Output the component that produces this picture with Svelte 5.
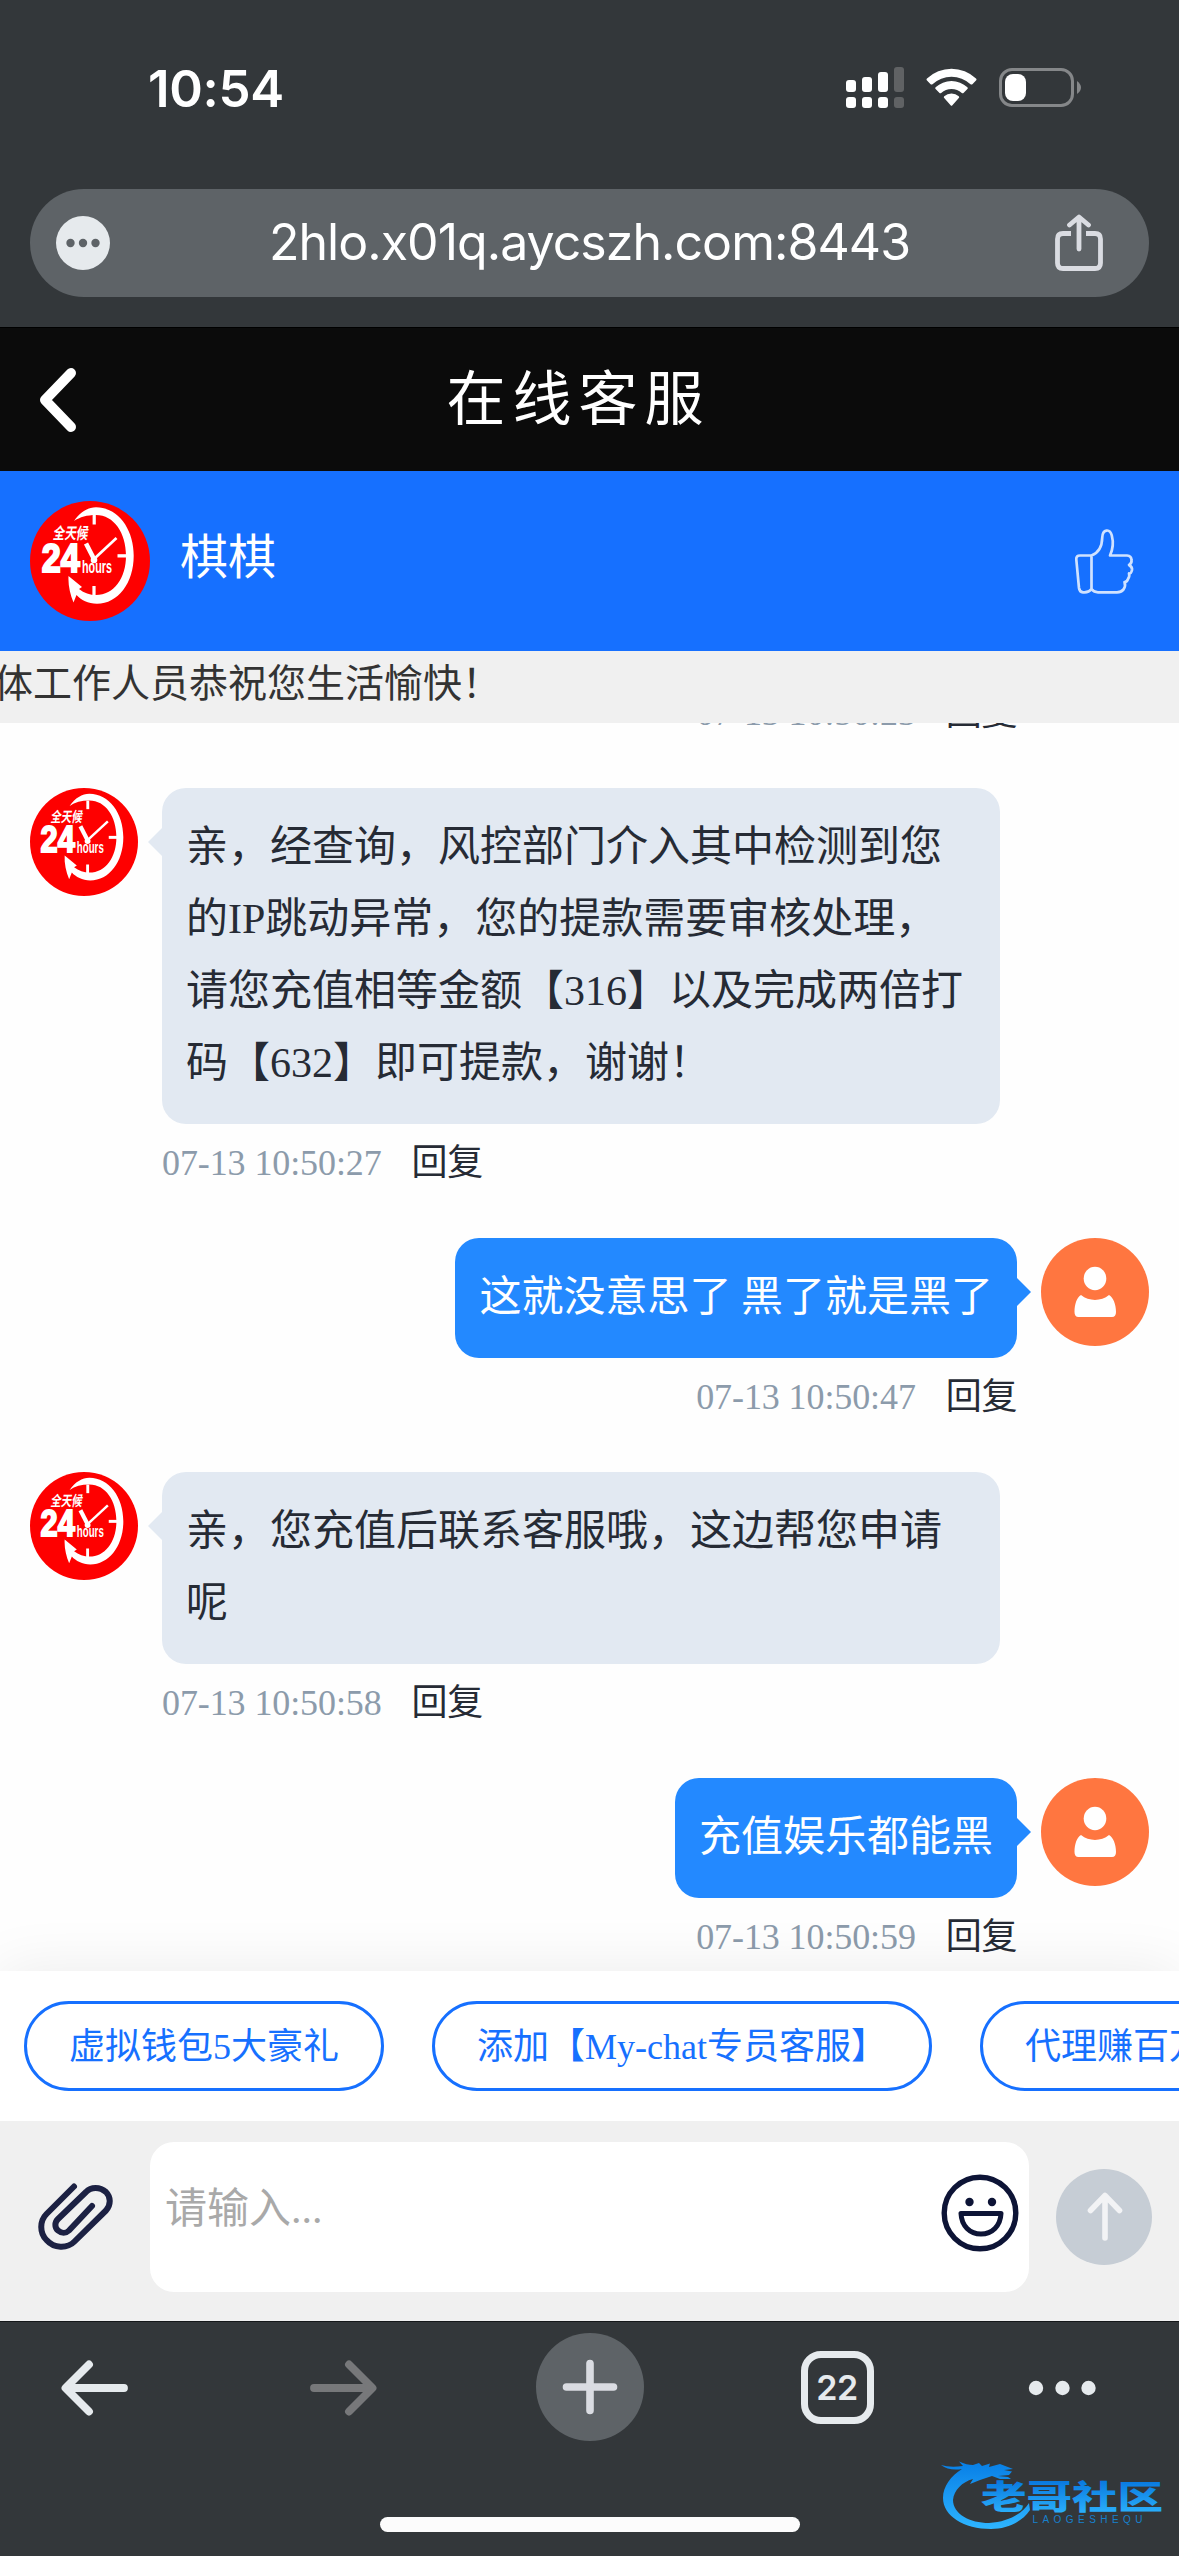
<script>
  const messages = [
    {
      side: 'left',
      lines: [
        '亲，经查询，风控部门介入其中检测到您',
        '的IP跳动异常，您的提款需要审核处理，',
        '请您充值相等金额【316】以及完成两倍打',
        '码【632】即可提款，谢谢！'
      ],
      time: '07-13 10:50:27'
    },
    { side: 'right', lines: ['这就没意思了 黑了就是黑了'], time: '07-13 10:50:47' },
    { side: 'left', lines: ['亲，您充值后联系客服哦，这边帮您申请', '呢'], time: '07-13 10:50:58' },
    { side: 'right', lines: ['充值娱乐都能黑'], time: '07-13 10:50:59' }
  ];
  const chips = ['虚拟钱包5大豪礼', '添加【My-chat专员客服】', '代理赚百万'];
</script>

{#snippet agentAvatar()}
  <svg class="avatar" viewBox="0 0 120 120">
    <circle cx="60" cy="60" r="60" fill="#fe0000" />
    <g fill="#fff">
      <path d="M44 20C50 11 58 6.3 66 6.3C88 6.3 103.7 28 103.7 54.7C103.7 82 88 102.7 67 102.7C58 102.7 51 99 46.5 94L43.5 101.5C40 93 38 84 38.5 75L52 86L49 88C54 92 60 94 66 94C84 94 96 77 96 54.7C96 32 84 14 66 14C57 14 50 16 44 20Z" />
      <rect x="62.6" y="14" width="3.2" height="9.5" />
      <rect x="87.5" y="53.2" width="9.5" height="3.3" />
      <rect x="62.4" y="85" width="3.2" height="10" />
      <circle cx="64" cy="59" r="3.3" />
      <path d="M56 42.5L64 58" stroke="#fff" stroke-width="4.6" />
      <path d="M64 58L86.5 37" stroke="#fff" stroke-width="2.7" />
      <text class="logo-cn" x="0" y="0" transform="translate(22.5 37.5) skewX(-10)" textLength="35" lengthAdjust="spacingAndGlyphs">全天候</text>
      <text class="logo-24" x="11.8" y="71.3" textLength="38" lengthAdjust="spacingAndGlyphs">24</text>
      <text class="logo-hours" x="52" y="72.3" textLength="30" lengthAdjust="spacingAndGlyphs">hours</text>
    </g>
  </svg>
{/snippet}

{#snippet userAvatar()}
  <svg class="avatar" viewBox="0 0 108 108">
    <circle cx="54" cy="54" r="54" fill="#ff7640" />
    <ellipse cx="54" cy="40.5" rx="11.3" ry="11.8" fill="#fff" />
    <path d="M33.5 74C33.5 66 36 59 40 57C48 63.5 60 63.5 68 57C72 59 75 66 75 74Q75 79 71 79H37.500Q33.500 79 33.500 74Z" fill="#fff" />
  </svg>
{/snippet}

<div class="screen">
  <header class="status">
    <span class="clock">10:54</span>
    <svg class="indicators" width="240" height="50" viewBox="843 63 240 50">
      <g fill="#fff">
        <rect x="846" y="80" width="10" height="12" rx="3" />
        <rect x="862" y="77" width="10" height="15" rx="3" />
        <rect x="878" y="72" width="10" height="20" rx="3" />
        <rect x="846" y="97" width="10" height="11" rx="3" />
        <rect x="862" y="97" width="10" height="11" rx="3" />
        <rect x="878" y="97" width="10" height="11" rx="3" />
      </g>
      <rect x="894" y="67" width="10" height="25" rx="3" fill="#606264" />
      <rect x="894" y="97" width="10" height="11" rx="3" fill="#606264" />
      <g fill="#fff">
        <path d="M927 78.500Q926 79.500 927 80.500L930.600 84.200Q931.500 85 932.500 84.200A28 28 0 0 1 970.500 84.200Q971.500 85 972.400 84.200L976 80.500Q977 79.500 976 78.500A35.500 35.500 0 0 0 927 78.500Z" />
        <path d="M935.600 87.300Q934.700 88.200 935.600 89.100L939.500 93Q940.300 93.700 941.200 93A15.500 15.500 0 0 1 961.800 93Q962.700 93.700 963.500 93L967.400 89.100Q968.300 88.200 967.400 87.300A23.500 23.500 0 0 0 935.600 87.300Z" />
        <path d="M944.200 96.200Q943.300 97.100 944.200 98L950.600 105.200Q951.500 106.200 952.400 105.200L958.800 98Q959.700 97.100 958.800 96.200A11 11 0 0 0 944.200 96.200Z" />
      </g>
      <rect x="1000.500" y="69.500" width="72" height="36" rx="11.500" fill="none" stroke="#858789" stroke-width="3" />
      <rect x="1005" y="74" width="21" height="27" rx="8" fill="#fff" />
      <path d="M1077 81Q1081 84 1081 87.500T1077 94Z" fill="#858789" />
    </svg>
  </header>

  <div class="address">
    <svg width="54" height="54" viewBox="0 0 54 54">
      <circle cx="27" cy="27" r="27" fill="#e6eaed" />
      <g fill="#5e6367"><circle cx="14.500" cy="27" r="4.200" /><circle cx="27" cy="27" r="4.200" /><circle cx="39.500" cy="27" r="4.200" /></g>
    </svg>
    <span class="url">2hlo.x01q.aycszh.com:8443</span>
    <svg width="50" height="58" viewBox="1054 215 50 58" fill="none" stroke="#dadce2" stroke-width="4.800">
      <path d="M1071 234.500H1063Q1057.500 234.500 1057.500 240V264Q1057.500 269.500 1063 269.500H1095Q1100.500 269.500 1100.500 264V240Q1100.500 234.500 1095 234.500H1086" />
      <path d="M1079 219V250M1069.500 226L1079 218L1088.500 226" stroke-linecap="round" stroke-linejoin="round" />
    </svg>
  </div>

  <div class="titlebar">
    <svg width="40" height="66" viewBox="0 0 40 66"><path d="M33 6L7 33L33 60" fill="none" stroke="#fff" stroke-width="10" stroke-linecap="round" stroke-linejoin="round" /></svg>
    <h1>在线客服</h1>
  </div>

  <div class="agent">
    {@render agentAvatar()}
    <span class="name">棋棋</span>
    <svg class="thumb" width="90" height="90" viewBox="0 0 90 90" fill="none" stroke="#d0e2ff" stroke-width="2.700" stroke-linejoin="round">
      <path d="M31.500 39.500H20Q16 39.500 16.300 43.500L19 72Q19.500 76 23 76.300Q28.500 77 31.500 73V39.500C38 37 42 32 42.200 22C42.500 12.500 50 12.500 51.800 19.500C53.800 27 53 33 50 39.500H67Q71.500 40 71.500 44Q72 47.500 69 49Q72.500 51 72 54Q71 58 69 57.500Q70 60 68 63Q67 66 64.500 66Q66 70 63.500 73.500Q61 76.300 57 76.300H38Q34 76.300 31.500 73" />
    </svg>
  </div>

  <div class="notice"><span>体工作人员恭祝您生活愉快！</span></div>

  <main class="chat">
    <div class="message right">
      <div class="column">
        <div class="meta"><time>07-13 10:50:23</time><span>回复</span></div>
      </div>
      <div class="spacer"></div>
    </div>
    {#each messages as m}
      <div class="message {m.side}">
        {#if m.side === 'left'}{@render agentAvatar()}{/if}
        <div class="column">
          <div class="bubble">
            {#each m.lines as line}<p>{line}</p>{/each}
          </div>
          <div class="meta"><time>{m.time}</time><span>回复</span></div>
        </div>
        {#if m.side === 'right'}{@render userAvatar()}{/if}
      </div>
    {/each}
  </main>

  <div class="chips">
    {#each chips as chip}<span class="chip">{chip}</span>{/each}
  </div>

  <div class="composer">
    <svg class="clip" width="80" height="74" viewBox="0 0 80 74" fill="none" stroke="#1c2143" stroke-width="6" stroke-linecap="round" stroke-linejoin="round">
      <path d="M38 6.500L10.500 34C3.500 41 3.500 53 10.500 60C18 68.500 31 69 38.500 61.500L70 30.500C75 25 75 17 70 12C64 6.500 55 6.500 50 12L22 39C18.500 42.500 18.500 47.500 22 50.500C25.500 53.500 30 53.500 33 50.500L56 26" />
    </svg>
    <div class="input">
      <span>请输入...</span>
      <svg width="78" height="78" viewBox="0 0 78 78" fill="none" stroke="#0d1436" stroke-width="5.400">
        <circle cx="39" cy="39" r="35.800" />
        <path d="M20 39.500H60C59.500 52 51 60 40 60S20.500 52 20 39.500Z" stroke-width="5" stroke-linejoin="round" />
        <g fill="#0d1436" stroke="none"><circle cx="28.500" cy="28" r="4.200" /><circle cx="51" cy="28" r="4.200" /></g>
      </svg>
    </div>
    <svg class="send" width="96" height="96" viewBox="0 0 96 96">
      <circle cx="48" cy="48" r="48" fill="#c6cdd5" />
      <path d="M49 69V27M34.500 41.500L49 26.500L63.500 41.500" fill="none" stroke="#f2f3f5" stroke-width="5.600" stroke-linecap="round" stroke-linejoin="round" />
    </svg>
  </div>

  <nav class="toolbar">
    <svg width="108" height="108" viewBox="0 0 108 108" fill="none" stroke="#e6eaed" stroke-width="7.800" stroke-linecap="round" stroke-linejoin="round"><path d="M25 55H83M48 31.500L24.500 55L48 78.500" /></svg>
    <svg width="108" height="108" viewBox="0 0 108 108" fill="none" stroke="#77787a" stroke-width="7.800" stroke-linecap="round" stroke-linejoin="round"><path d="M83 55H25M60 31.500L83.500 55L60 78.500" /></svg>
    <svg width="108" height="108" viewBox="0 0 108 108"><circle cx="54" cy="54" r="54" fill="#5e6367" /><path d="M54 30.500V77.500M30.500 54H77.500" stroke="#dadce2" stroke-width="7.600" stroke-linecap="round" /></svg>
    <div class="tabs"><span>22</span></div>
    <svg class="more" width="108" height="108" viewBox="0 0 108 108" fill="#e6eaed"><circle cx="28" cy="55" r="7.200" /><circle cx="54.500" cy="55" r="7.200" /><circle cx="80.500" cy="55" r="7.200" /></svg>
  </nav>
  <div class="home"></div>

  <svg class="watermark" width="259" height="116" viewBox="0 0 259 116">
    <defs>
      <linearGradient id="sea" gradientUnits="userSpaceOnUse" x1="0" y1="22" x2="0" y2="88"><stop offset="0" stop-color="#087fe6" /><stop offset="1" stop-color="#2db4ff" /></linearGradient>
      <linearGradient id="word" x1="0" y1="0" x2="0" y2="1"><stop offset=".2" stop-color="#0878df" /><stop offset=".9" stop-color="#2bb0fb" /></linearGradient>
    </defs>
    <path fill="url(#sea)" d="M21 25Q30 28 43 26L39 21.500Q47 25 53 25L59 23L62 26L70 23.500L69 27L80 24L93 29L84 30L92 31.500L89 35L78 36L88 37L91 39L80 39L72 36L60 40L50 44L53 39C42 42 34 50 33 60C33 74 50 83 69 83C88 82 102 74 109 63L110 70C102 82 87 89 71 89C44 89 23 76 23 58C23 46 31 36 42 29Q29 31 21 25Z" />
    <text class="wm-cn" transform="translate(61 69) scale(1.38 1)" fill="url(#word)">老哥社区</text>
    <text class="wm-en" x="112.500" y="82.800" textLength="110">LAOGESHEQU</text>
  </svg>
</div>

<style>
  :global(body) { margin: 0; background: #33373a; }
  .screen {
    position: relative;
    width: 1179px;
    height: 2556px;
    overflow: hidden;
    display: flex;
    flex-direction: column;
    background: #33373a;
    font-family: "Liberation Serif", "Noto Sans CJK SC", serif;
  }
  svg { display: block; flex: none; }

  .status {
    height: 189px;
    display: flex;
    justify-content: space-between;
    align-items: flex-start;
    padding: 0 96px 0 148px;
    box-sizing: border-box;
  }
  .clock { margin-top: 58px; font: 600 51px/62px Inter, sans-serif; letter-spacing: -0.3px; color: #fff; }
  .indicators { margin-top: 63px; }

  .address {
    height: 108px;
    margin: 0 30px 30px;
    padding: 0 45px 0 26px;
    display: flex;
    align-items: center;
    justify-content: space-between;
    border-radius: 54px;
    background: #5e6367;
    flex: none;
  }
  .url { font: 400 50px/60px Inter, sans-serif; letter-spacing: -0.95px; color: #fff; margin: -3px 0 0 15px; }

  .titlebar {
    height: 144px;
    box-sizing: border-box;
    border-top: 1px solid #000;
    background: #0b0b0b;
    display: grid;
    grid-template-columns: 100px 1fr 100px;
    align-items: center;
    flex: none;
  }
  .titlebar svg { margin-left: 38px; }
  h1 {
    margin: -9px 0 0;
    text-align: center;
    color: #fff;
    font: 400 59px/80px "Noto Sans CJK SC", sans-serif;
    letter-spacing: 7px;
    text-indent: -22px;
  }

  .agent {
    height: 180px;
    flex: none;
    background: #1670ff;
    display: flex;
    align-items: center;
    padding: 0 29px 0 30px;
  }
  .agent .avatar { width: 120px; height: 120px; }
  .name { margin: -7px 0 0 30px; color: #fff; font-size: 48px; line-height: 70px; flex: 1; }
  .logo-cn { font: 700 16px "Noto Sans CJK SC", sans-serif; }
  .logo-24 { font: 700 41px "Liberation Sans", sans-serif; stroke: #fff; stroke-width: 2.2px; }
  .logo-hours { font: 700 17.5px "Liberation Sans", sans-serif; }

  .notice {
    height: 72px;
    flex: none;
    background: #f0f0f0;
    color: #333;
    font-size: 39px;
    line-height: 65px;
    white-space: nowrap;
  }
  .notice span { margin-left: -6px; }

  .chat {
    height: 1248px;
    box-sizing: border-box;
    flex: none;
    overflow: hidden;
    display: flex;
    flex-direction: column;
    justify-content: flex-end;
    gap: 54px;
    padding: 0 30px 13px;
    background: #fefefe;
  }
  .message { display: flex; gap: 24px; align-items: flex-start; flex: none; }
  .message.right { justify-content: flex-end; }
  .message .avatar { width: 108px; height: 108px; }
  .spacer { width: 108px; }
  .column { display: flex; flex-direction: column; }
  .right .column { align-items: flex-end; }
  .bubble {
    position: relative;
    box-sizing: border-box;
    padding: 23px 24px 25px;
    border-radius: 24px;
    background: #2389ff;
    color: #fff;
    font-size: 42px;
    line-height: 72px;
    white-space: nowrap;
  }
  .right .bubble { word-spacing: -1px; }
  .left .bubble { width: 838px; background: #e2e9f2; color: #262b35; }
  .bubble::after {
    content: "";
    position: absolute;
    top: 39px;
    width: 15px;
    height: 30px;
  }
  .left .bubble::after { left: -14px; background: #e2e9f2; clip-path: polygon(100% 0, 0 50%, 100% 100%); }
  .right .bubble::after { right: -14px; background: #2389ff; clip-path: polygon(0 0, 100% 50%, 0 100%); }
  p { margin: 0; height: 72px; }
  .meta {
    height: 60px;
    display: flex;
    gap: 30px;
    font-size: 36px;
    line-height: 79px;
    white-space: nowrap;
    color: #262b35;
  }
  .meta span { letter-spacing: -0.4px; }
  time { color: #8c9bab; letter-spacing: -0.1px; }

  .chips {
    position: relative;
    height: 150px;
    box-sizing: border-box;
    flex: none;
    display: flex;
    gap: 48px;
    padding: 30px 24px;
    background: #fff;
    box-shadow: 0 0 60px rgba(0, 0, 0, 0.08);
    clip-path: inset(-80px 0 0 0);
  }
  .chip {
    box-sizing: border-box;
    height: 90px;
    flex: none;
    padding: 0 42px;
    border: 3px solid #1670ff;
    border-radius: 45px;
    color: #1670ff;
    font-size: 36px;
    line-height: 86px;
    white-space: nowrap;
  }

  .composer {
    position: relative;
    height: 201px;
    box-sizing: border-box;
    flex: none;
    display: flex;
    align-items: flex-start;
    padding: 21px 27px 0 36px;
    background: #f0f0f0;
    border-bottom: 1px solid #15181a;
  }
  .clip { margin: 38px 34px 0 0; }
  .input {
    flex: 1;
    height: 150px;
    box-sizing: border-box;
    display: flex;
    justify-content: space-between;
    align-items: flex-start;
    padding: 0 10px 0 15px;
    border-radius: 24px;
    background: #fff;
  }
  .input span { color: #a9a9a9; font-size: 42px; line-height: 135px; }
  .input svg { margin-top: 32px; }
  .send { margin: 27px 0 0 27px; }

  .toolbar {
    height: 108px;
    margin-top: 11px;
    padding-left: 41px;
    display: flex;
    gap: 139.5px;
    align-items: center;
    flex: none;
  }
  .tabs {
    width: 73px;
    height: 73px;
    margin: 1px 17px 0;
    box-sizing: border-box;
    border: 7px solid #e6eaed;
    border-radius: 20px;
    display: flex;
    align-items: center;
    justify-content: center;
    flex: none;
    color: #e6eaed;
    font: 600 34px/40px Inter, sans-serif;
    letter-spacing: -0.5px;
  }
  .more { margin-left: -22px; }
  .home { width: 420px; height: 15px; margin: 76px auto 0; border-radius: 8px; background: #fcfcfc; flex: none; }

  .watermark { position: absolute; left: 920px; top: 2440px; }
  .wm-cn { font: 900 33px "Noto Sans CJK SC", sans-serif; }
  .wm-en { font: 400 10px "Liberation Sans", sans-serif; fill: #1780cc; }
</style>
